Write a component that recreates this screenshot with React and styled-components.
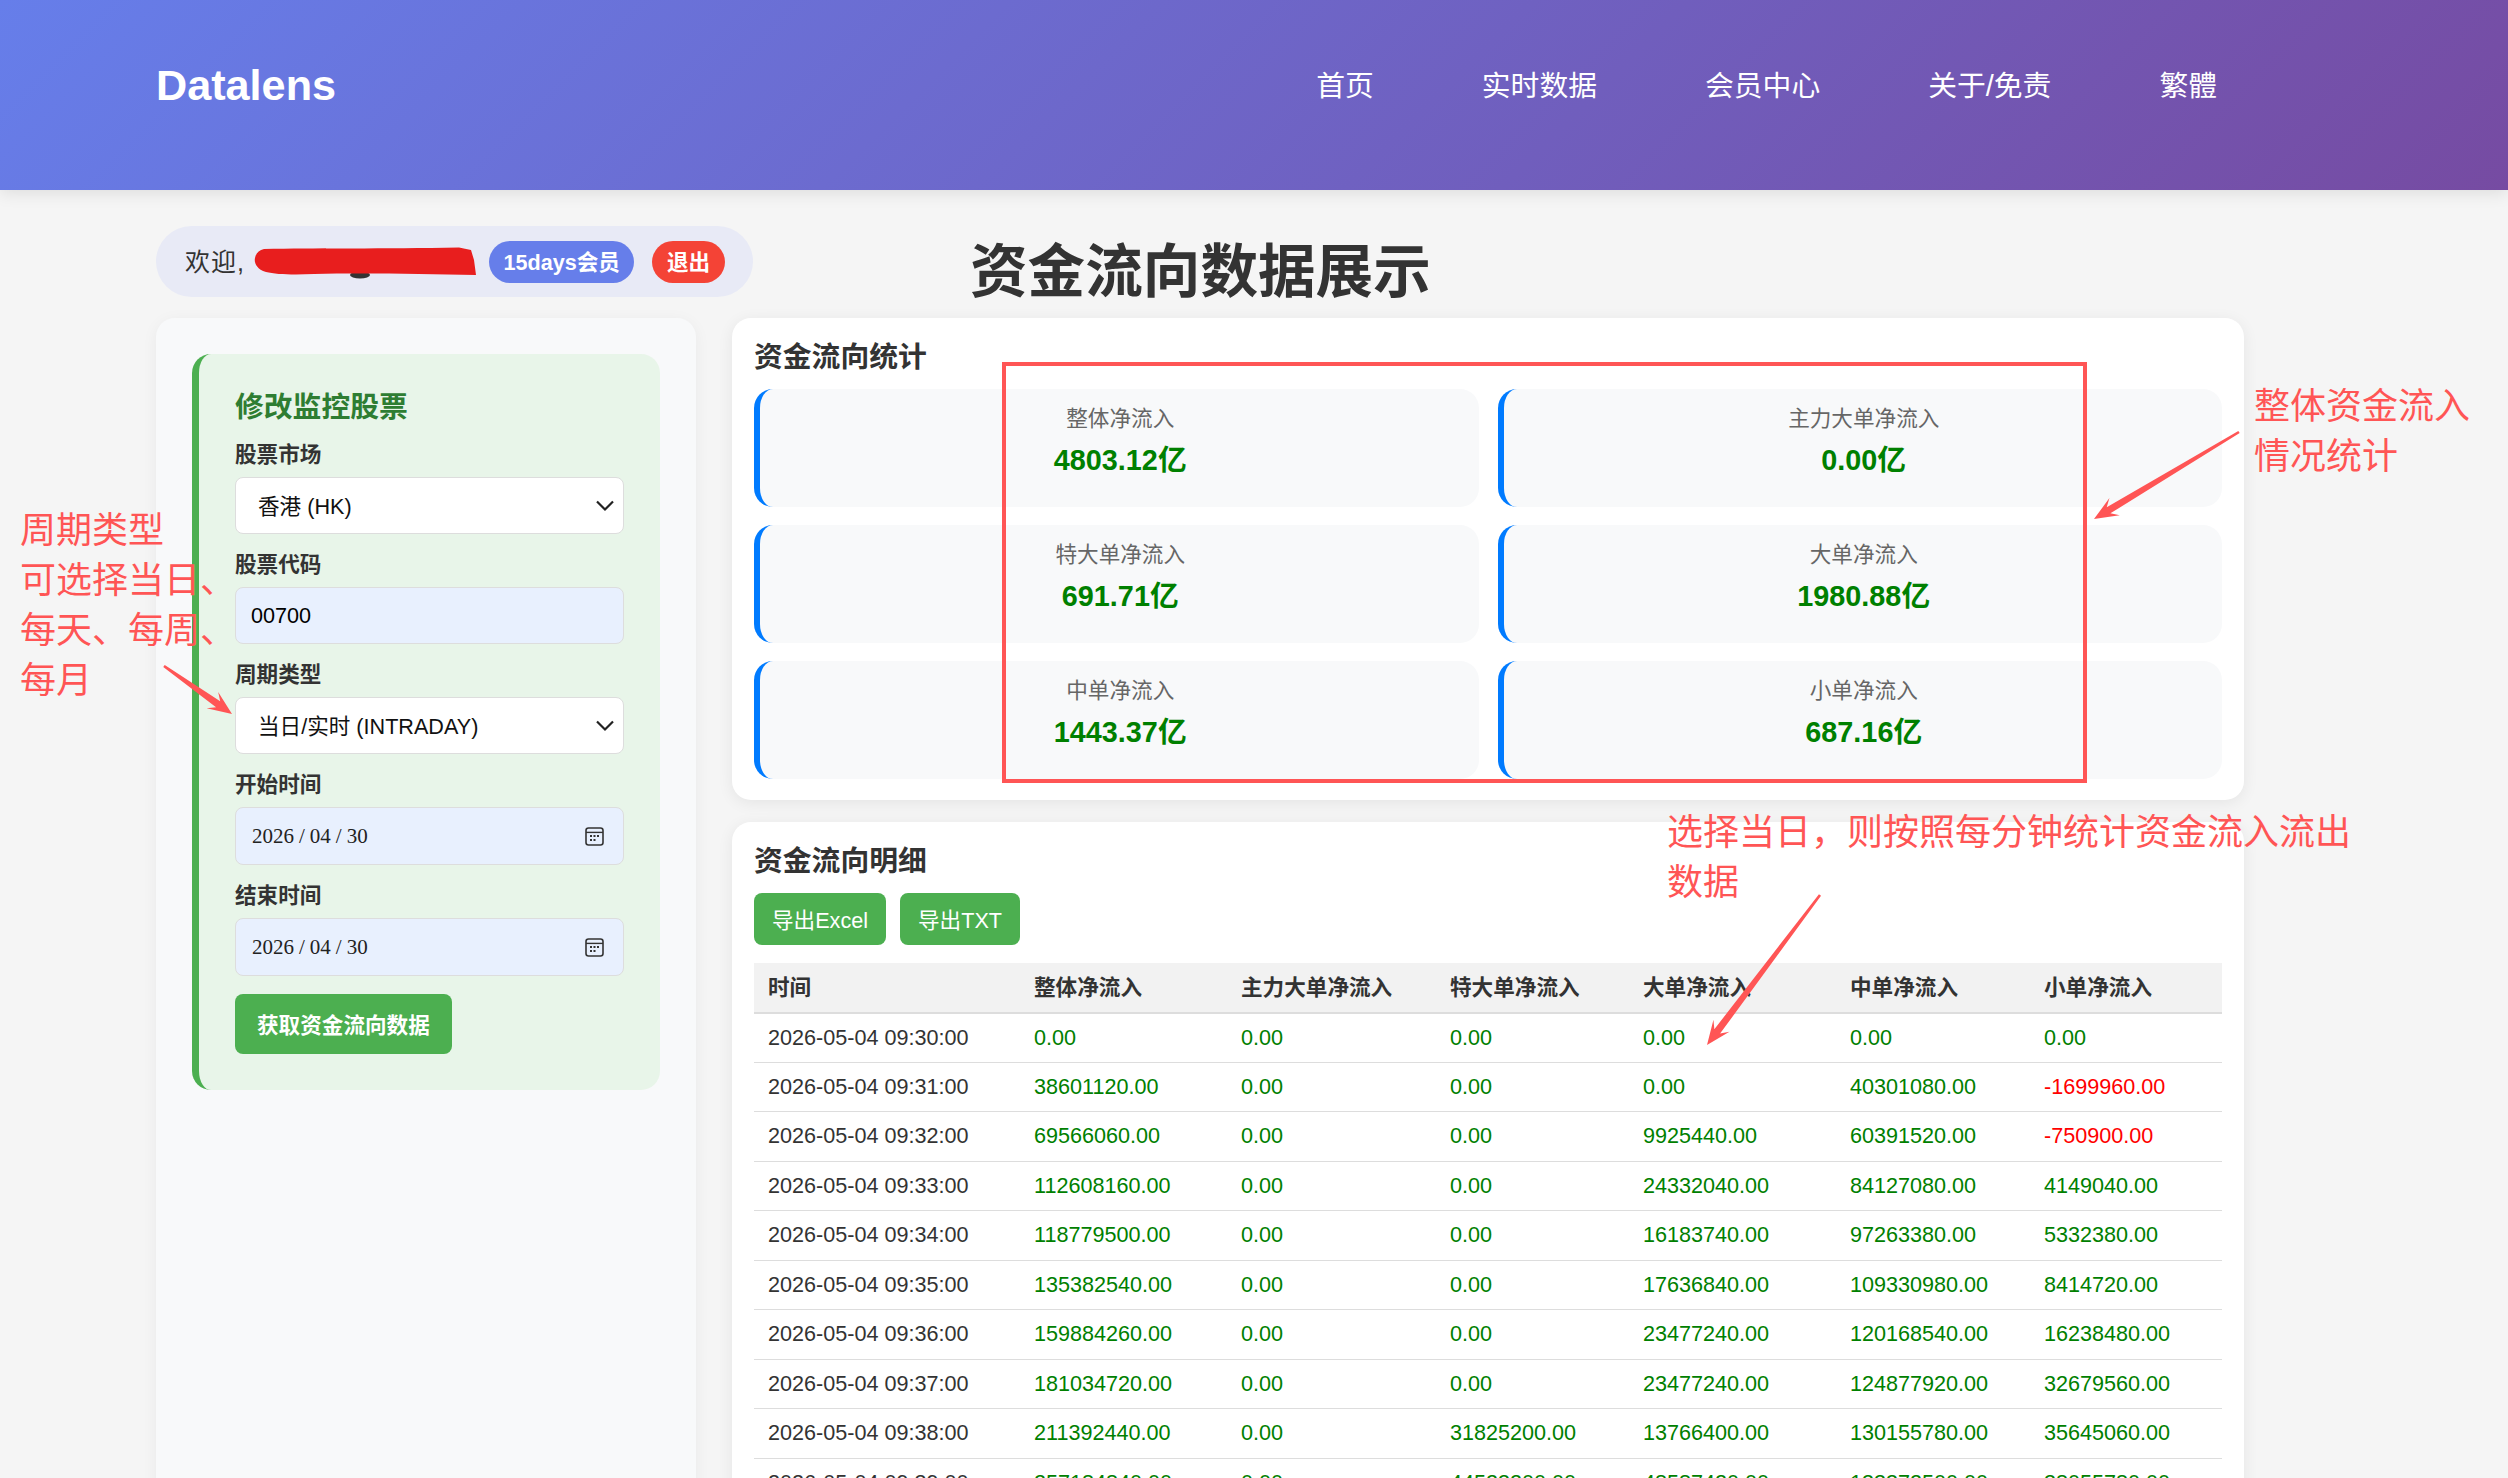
import React from "react";
import styled, { createGlobalStyle } from "styled-components";

const SANS = `"Liberation Sans", "Noto Sans CJK SC", sans-serif`;
const MARK = "#ff5555";

const Global = createGlobalStyle`
  html, body { margin: 0; padding: 0; height: 1478px; overflow: hidden; background: #f5f5f5; }
  body { font-family: ${SANS}; color: #333; }
  * { box-sizing: border-box; }
`;

const Page = styled.div`
  position: relative;
  width: 2508px;
  height: 1478px;
  overflow: hidden;
`;

const Header = styled.header`
  height: 190px;
  padding: 0 291px 20px 156px;
  display: flex;
  align-items: center;
  justify-content: space-between;
  background: linear-gradient(135deg, #667eea 0%, #764ba2 100%);
  box-shadow: 0 3px 16px rgba(0, 0, 0, 0.1);
  color: #fff;
  position: relative;
`;

const Logo = styled.div`
  font-size: 43.2px;
  font-weight: 700;
`;

const Nav = styled.nav`
  display: flex;
  gap: 108px;
  margin-bottom: 3px;
  font-size: 28.8px;
`;

const Main = styled.main`
  padding: 36px 264px 0 156px;
`;

const TopRow = styled.div`
  display: flex;
  align-items: center;
  height: 71px;
`;

const UserPill = styled.div`
  width: 597px;
  height: 71px;
  flex: none;
  padding: 0 29px;
  display: flex;
  align-items: center;
  border-radius: 36px;
  background: #e8eaf6;
`;

const Welcome = styled.span`
  width: 69px;
  flex: none;
  margin-bottom: 3px;
  font-size: 25px;
  letter-spacing: 1px;
  white-space: nowrap;
`;

const Redaction = styled.svg`
  width: 224px;
  height: 34px;
  flex: none;
  margin-right: 11px;
  margin-top: 2px;
`;

const Badge = styled.span`
  height: 42px;
  padding: 0 ${(p) => p.$pad}px 3px;
  margin-right: 18px;
  display: flex;
  align-items: center;
  border-radius: 21px;
  background: ${(p) => p.$bg};
  color: #fff;
  font-size: 21.6px;
  font-weight: 700;
  white-space: nowrap;
  &:last-child { margin-right: 0; }
`;

const PageTitle = styled.h1`
  margin: 21px 0 0 217px;
  font-size: 57.6px;
  line-height: 70px;
  font-weight: 700;
  color: #333;
  white-space: nowrap;
`;

const Columns = styled.div`
  margin-top: 21px;
  display: grid;
  grid-template-columns: 540px 1512px;
  gap: 36px;
  height: 1300px;
`;

const Sidebar = styled.aside`
  padding: 36px;
  border-radius: 19px;
  background: #f8f9fa;
  box-shadow: 0 3px 16px rgba(0, 0, 0, 0.05);
`;

const FormBox = styled.section`
  padding: 33px 36px 36px 36px;
  border-left: 7px solid #4caf50;
  border-radius: 19px;
  background: #e8f5e9;
`;

const FormTitle = styled.h2`
  margin: 0 0 15px;
  font-size: 28.8px;
  line-height: 40px;
  font-weight: 700;
  color: #2e7d32;
`;

const Field = styled.div`
  margin-bottom: 18px;
`;

const Label = styled.label`
  display: block;
  margin-bottom: 9px;
  font-size: 21.6px;
  line-height: 26px;
  font-weight: 700;
  color: #333;
`;

const SelectBox = styled.div`
  height: 57px;
  padding: 0 8px 3px 22px;
  display: flex;
  align-items: center;
  justify-content: space-between;
  border: 1.5px solid #ddd;
  border-radius: 8px;
  background: #fff;
  font-size: 21.6px;
  color: #111;
`;

const TextBox = styled.div`
  height: 57px;
  padding: 0 15px;
  display: flex;
  align-items: center;
  border: 1.5px solid #ddd;
  border-radius: 8px;
  background: #e8f0fe;
  font-size: 21.6px;
  color: #000;
`;

const DateBox = styled(TextBox)`
  height: 58px;
  padding: 0 19px 0 16px;
  justify-content: space-between;
  font-family: "Liberation Serif", "Noto Serif CJK SC", serif;
  font-size: 21px;
  color: #222;
`;

const Slash = styled.span`
  margin: 0 5px;
`;

const Chevron = styled.svg`
  width: 20px;
  height: 13px;
  flex: none;
  margin-top: 3px;
`;

const CalIcon = styled.svg`
  width: 19px;
  height: 19px;
  flex: none;
`;

const SubmitButton = styled.button`
  height: 60px;
  margin-top: 1px;
  padding: 0 22px 2px;
  display: block;
  border: 0;
  border-radius: 8px;
  background: #4caf50;
  color: #fff;
  font-family: ${SANS};
  font-size: 21.6px;
  font-weight: 700;
`;

const RightCol = styled.div`
  display: flex;
  flex-direction: column;
  gap: 22px;
`;

const Panel = styled.section`
  padding: 21px 22px 21px 22px;
  border-radius: 19px;
  background: #fff;
  box-shadow: 0 3px 16px rgba(0, 0, 0, 0.07);
`;

const PanelTitle = styled.h2`
  margin: 0 0 14px;
  font-size: 28.8px;
  line-height: 36px;
  font-weight: 700;
  color: #333;
`;

const StatGrid = styled.div`
  display: grid;
  grid-template-columns: 1fr 1fr;
  grid-auto-rows: 118px;
  column-gap: 19px;
  row-gap: 18px;
`;

const StatCard = styled.div`
  padding: 17px 0 0 2px;
  border-left: 6px solid #007bff;
  border-radius: 19px;
  background: #f8f9fa;
  text-align: center;
`;

const StatLabel = styled.div`
  font-size: 21.6px;
  line-height: 26px;
  color: #666;
`;

const StatValue = styled.div`
  margin-top: 10px;
  font-size: 28.8px;
  line-height: 36px;
  font-weight: 700;
  color: #008000;
`;

const ExportRow = styled.div`
  display: flex;
  gap: 14px;
  margin-bottom: 18px;
`;

const ExportButton = styled.button`
  height: 52px;
  padding: 0 18px 2px;
  border: 0;
  border-radius: 8px;
  background: #4caf50;
  color: #fff;
  font-family: ${SANS};
  font-size: 21.6px;
`;

const Table = styled.table`
  width: 1468px;
  table-layout: fixed;
  border-collapse: collapse;
  font-size: 21.6px;
`;

const Th = styled.th`
  height: 49.5px;
  padding: 0 14px 3px;
  border-bottom: 2px solid #ddd;
  background: #f2f2f2;
  text-align: left;
  font-weight: 700;
  color: #333;
`;

const Td = styled.td`
  height: 49.5px;
  padding: 0 14px;
  border-bottom: 1px solid #ddd;
  white-space: nowrap;
  color: ${(p) => (p.$tone === "pos" ? "#008000" : p.$tone === "neg" ? "#ff0000" : "#333")};
`;

const Overlay = styled.svg`
  position: absolute;
  inset: 0;
  width: 2508px;
  height: 1478px;
  pointer-events: none;
`;

const Note = styled.div`
  position: absolute;
  left: ${(p) => p.$x}px;
  top: ${(p) => p.$y}px;
  color: ${MARK};
  font-family: "Noto Sans CJK SC", sans-serif;
  font-size: 36px;
  font-weight: 400;
  line-height: ${(p) => p.$lh}px;
  white-space: nowrap;
`;

const HighlightBox = styled.div`
  position: absolute;
  left: 1002px;
  top: 362px;
  width: 1085px;
  height: 421px;
  border: 4.5px solid ${MARK};
`;

const arrowPoints = ([x1, y1, x2, y2]) => {
  const L = Math.hypot(x2 - x1, y2 - y1);
  const dx = (x2 - x1) / L;
  const dy = (y2 - y1) / L;
  const at = (back, side) => `${x2 - dx * back - dy * side},${y2 - dy * back + dx * side}`;
  const len = 24;
  const wid = 10;
  const neck = 17;
  return [
    at(L, 1.3), at(neck, 3.6), at(len, wid), at(0, 0), at(len, -wid), at(neck, -3.6), at(L, -1.3),
  ].join(" ");
};

const ARROWS = [
  [164, 666, 232, 714],
  [2239, 432, 2094, 519],
  [1820, 895, 1707, 1045],
];

const STATS = [
  ["整体净流入", "4803.12亿"],
  ["主力大单净流入", "0.00亿"],
  ["特大单净流入", "691.71亿"],
  ["大单净流入", "1980.88亿"],
  ["中单净流入", "1443.37亿"],
  ["小单净流入", "687.16亿"],
];

const COLS = [266, 207, 209, 193, 207, 194, 192];
const HEAD = ["时间", "整体净流入", "主力大单净流入", "特大单净流入", "大单净流入", "中单净流入", "小单净流入"];
const ROWS = [
  ["09:30:00", "0.00", "0.00", "0.00", "0.00", "0.00", "0.00"],
  ["09:31:00", "38601120.00", "0.00", "0.00", "0.00", "40301080.00", "-1699960.00"],
  ["09:32:00", "69566060.00", "0.00", "0.00", "9925440.00", "60391520.00", "-750900.00"],
  ["09:33:00", "112608160.00", "0.00", "0.00", "24332040.00", "84127080.00", "4149040.00"],
  ["09:34:00", "118779500.00", "0.00", "0.00", "16183740.00", "97263380.00", "5332380.00"],
  ["09:35:00", "135382540.00", "0.00", "0.00", "17636840.00", "109330980.00", "8414720.00"],
  ["09:36:00", "159884260.00", "0.00", "0.00", "23477240.00", "120168540.00", "16238480.00"],
  ["09:37:00", "181034720.00", "0.00", "0.00", "23477240.00", "124877920.00", "32679560.00"],
  ["09:38:00", "211392440.00", "0.00", "31825200.00", "13766400.00", "130155780.00", "35645060.00"],
  ["09:39:00", "257184840.00", "0.00", "44523200.00", "48587420.00", "133372500.00", "38055780.00"],
];

const ChevronIcon = () => (
  <Chevron viewBox="0 0 20 13">
    <path d="M2 2.5 L10 10.5 L18 2.5" fill="none" stroke="#222" strokeWidth="2.2" />
  </Chevron>
);

const Calendar = () => (
  <CalIcon viewBox="0 0 19 19">
    <rect x="1" y="1" width="17" height="17" rx="2.5" fill="none" stroke="#333" strokeWidth="1.6" />
    <path d="M1 5.4H18" stroke="#333" strokeWidth="1.4" />
    <g fill="#333">
      <rect x="5" y="8" width="2" height="2" />
      <rect x="8.5" y="8" width="2" height="2" />
      <rect x="12" y="8" width="2" height="2" />
      <rect x="5" y="12" width="2" height="2" />
      <rect x="8.5" y="12" width="2" height="2" />
    </g>
  </CalIcon>
);

const DateValue = () => (
  <span>
    2026<Slash>/</Slash>04<Slash>/</Slash>30
  </span>
);

export default function App() {
  return (
    <Page>
      <Global />
      <Header>
        <Logo>Datalens</Logo>
        <Nav>
          <span>首页</span>
          <span>实时数据</span>
          <span>会员中心</span>
          <span>关于/免责</span>
          <span>繁體</span>
        </Nav>
      </Header>
      <Main>
        <TopRow>
          <UserPill>
            <Welcome>欢迎,</Welcome>
            <Redaction viewBox="0 0 224 34">
              <ellipse cx="106" cy="29" rx="10" ry="3.4" fill="#333" />
              <path
                d="M10 3 C60 2 130 3 205 1.5 L217 4 L220 14 L222 29 C170 28 110 27 60 28 C40 29 22 28.5 12 26 C2 23 0 16 1 12 C2 7 5 4 10 3 Z"
                fill="#e81e1e"
              />
            </Redaction>
            <Badge $bg="#667eea" $pad={14.5}>15days会员</Badge>
            <Badge $bg="#f44336" $pad={14.5}>退出</Badge>
          </UserPill>
          <PageTitle>资金流向数据展示</PageTitle>
        </TopRow>
        <Columns>
          <Sidebar>
            <FormBox>
              <FormTitle>修改监控股票</FormTitle>
              <Field>
                <Label>股票市场</Label>
                <SelectBox>香港 (HK)<ChevronIcon /></SelectBox>
              </Field>
              <Field>
                <Label>股票代码</Label>
                <TextBox>00700</TextBox>
              </Field>
              <Field>
                <Label>周期类型</Label>
                <SelectBox>当日/实时 (INTRADAY)<ChevronIcon /></SelectBox>
              </Field>
              <Field>
                <Label>开始时间</Label>
                <DateBox><DateValue /><Calendar /></DateBox>
              </Field>
              <Field>
                <Label>结束时间</Label>
                <DateBox><DateValue /><Calendar /></DateBox>
              </Field>
              <SubmitButton>获取资金流向数据</SubmitButton>
            </FormBox>
          </Sidebar>
          <RightCol>
            <Panel>
              <PanelTitle>资金流向统计</PanelTitle>
              <StatGrid>
                {STATS.map(([label, value]) => (
                  <StatCard key={label}>
                    <StatLabel>{label}</StatLabel>
                    <StatValue>{value}</StatValue>
                  </StatCard>
                ))}
              </StatGrid>
            </Panel>
            <Panel>
              <PanelTitle>资金流向明细</PanelTitle>
              <ExportRow>
                <ExportButton>导出Excel</ExportButton>
                <ExportButton>导出TXT</ExportButton>
              </ExportRow>
              <Table>
                <colgroup>
                  {COLS.map((w, i) => (
                    <col key={i} width={w} />
                  ))}
                </colgroup>
                <thead>
                  <tr>
                    {HEAD.map((h) => (
                      <Th key={h}>{h}</Th>
                    ))}
                  </tr>
                </thead>
                <tbody>
                  {ROWS.map(([time, ...vals]) => (
                    <tr key={time}>
                      <Td>2026-05-04 {time}</Td>
                      {vals.map((v, i) => (
                        <Td key={i} $tone={v.startsWith("-") ? "neg" : "pos"}>{v}</Td>
                      ))}
                    </tr>
                  ))}
                </tbody>
              </Table>
            </Panel>
          </RightCol>
        </Columns>
      </Main>

      <HighlightBox />
      <Overlay viewBox="0 0 2508 1478">
        {ARROWS.map((a, i) => (
          <polygon key={i} points={arrowPoints(a)} fill={MARK} />
        ))}
      </Overlay>
      <Note $x={20} $y={502} $lh={50}>
        周期类型<br />可选择当日、<br />每天、每周、<br />每月
      </Note>
      <Note $x={2254} $y={379} $lh={49.5}>
        整体资金流入<br />情况统计
      </Note>
      <Note $x={1667} $y={805} $lh={49.5}>
        选择当日，则按照每分钟统计资金流入流出<br />数据
      </Note>
    </Page>
  );
}
